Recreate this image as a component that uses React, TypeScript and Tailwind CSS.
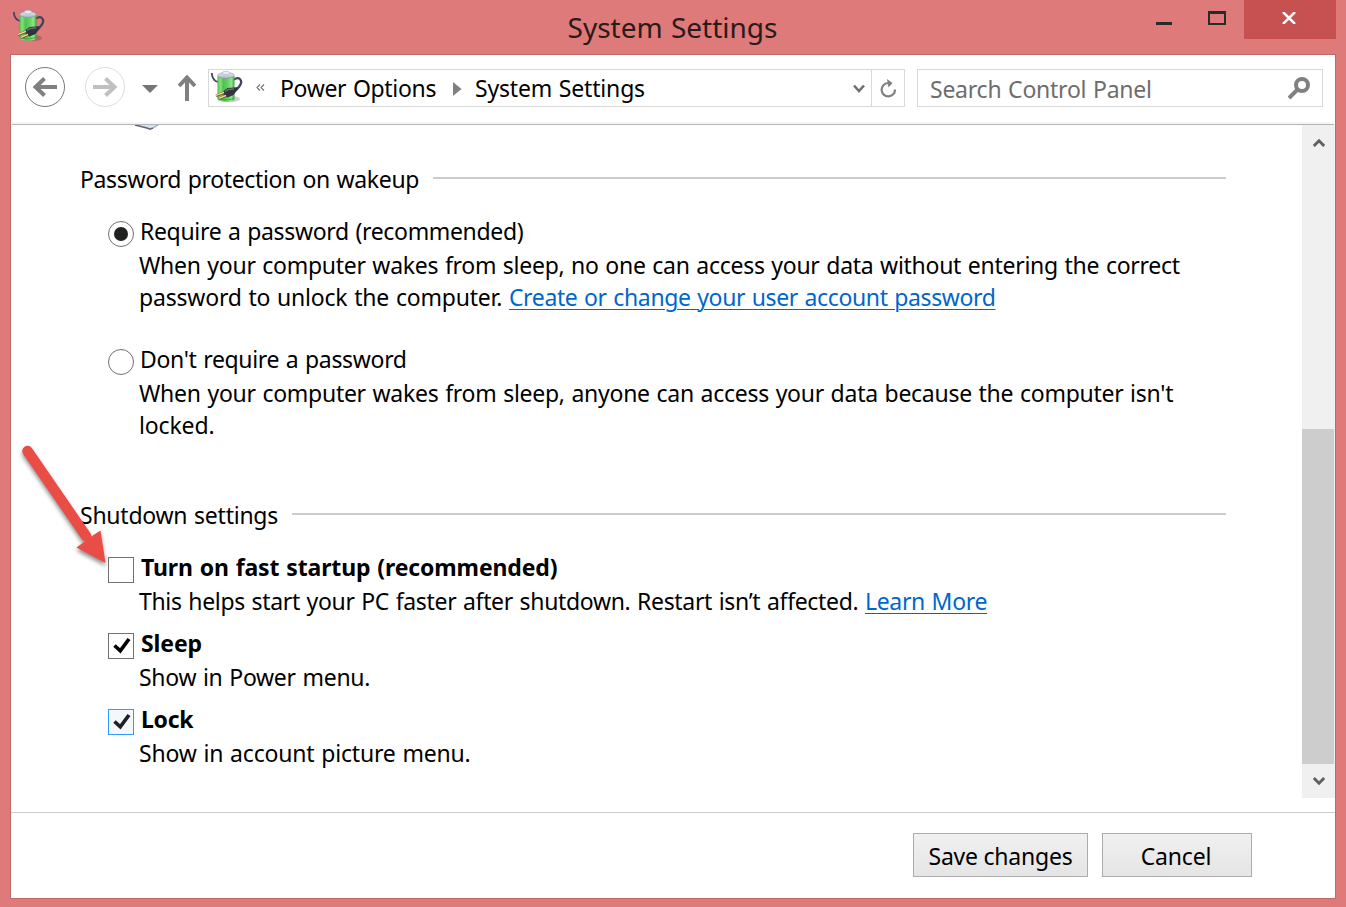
import React from 'react';

function PowerIcon() {
  return (
    <svg width="32" height="34" viewBox="0 0 32 34" className="shrink-0">
      <defs>
        <linearGradient id="cell" x1="0" x2="1" y1="0" y2="0">
          <stop offset="0" stopColor="#4fb44e" />
          <stop offset="0.15" stopColor="#86e280" />
          <stop offset="0.35" stopColor="#4ec24f" />
          <stop offset="0.6" stopColor="#62d25f" />
          <stop offset="0.82" stopColor="#8ce787" />
          <stop offset="1" stopColor="#3f9f43" />
        </linearGradient>
        <linearGradient id="cap" x1="0" x2="0" y1="0" y2="1">
          <stop offset="0" stopColor="#eef1f6" />
          <stop offset="1" stopColor="#a3afbf" />
        </linearGradient>
      </defs>
      <ellipse cx="21" cy="29" rx="8" ry="3" fill="#000" opacity="0.18" />
      <path d="M0.800 3C1 8 3 11 7 12" fill="none" stroke="#45425f" strokeWidth="1.800" />
      <path d="M23 9.500C28 6 31.500 10 29.500 14.500C28.500 17 27 18 25 20" fill="none" stroke="#45425f" strokeWidth="2.300" />
      <path d="M6.500 6V29C6.500 32.600 23.500 32.600 23.500 29V6Z" fill="url(#cell)" />
      <path d="M6.800 27.500C8 30.500 22 30.500 23.200 27.500" fill="none" stroke="#3c9a42" strokeWidth="0.800" />
      <ellipse cx="15" cy="5.500" rx="8.300" ry="3" fill="url(#cap)" stroke="#8794a6" strokeWidth="0.600" />
      <ellipse cx="15" cy="3" rx="3.600" ry="1.800" fill="#e9eef3" stroke="#a4afbb" strokeWidth="0.600" />
      <path d="M12.500 21L16.500 18L23 17.500L26.500 17L26 20.500L22.500 25L16.500 27.500L12.500 25Z" fill="#34333d" />
      <path d="M14 21.500L17 19.500L23 19" fill="none" stroke="#6c6c7a" strokeWidth="1.500" />
      <path d="M13 22.800L5 25.800M15 25.800L8 28.800" stroke="#7a5526" strokeWidth="2.600" />
      <path d="M13 22.400L5 25.400M15 25.400L8 28.400" stroke="#f3d8a0" strokeWidth="1.500" />
    </svg>
  );
}

function Chevron({ up = false }: { up?: boolean }) {
  return (
    <svg width="12" height="10" viewBox="0 0 12 10">
      <path d={up ? 'M0.800 8L6 2.800L11.200 8' : 'M0.800 2L6 7.200L11.200 2'} fill="none" stroke="#606060" strokeWidth="2.900" />
    </svg>
  );
}

function Heading({ text, className }: { text: string; className: string }) {
  return (
    <div className="flex h-8 w-[1146px] items-center">
      <h2 className={`shrink-0 ${className}`}>{text}</h2>
      <div className="mb-[3px] h-[2px] flex-1 bg-[#cccccc]" />
    </div>
  );
}

function Radio({ checked = false }: { checked?: boolean }) {
  return (
    <svg width="26" height="26" viewBox="0 0 26 26" className="mt-[6px] shrink-0">
      <circle cx="13" cy="13" r="12.500" fill="#fff" stroke="#707070" />
      {checked && <circle cx="13" cy="13" r="7" fill="#212121" />}
    </svg>
  );
}

function Check({ checked = false, hot = false }: { checked?: boolean; hot?: boolean }) {
  return (
    <div className={`mt-[6px] h-[26px] w-[26px] shrink-0 border ${hot ? 'border-[#3399ff] bg-[#f3f8ff]' : 'border-[#707070] bg-white'}`}>
      {checked && (
        <svg width="24" height="24" viewBox="0 0 24 24">
          <path d="M5.500 11.500L11.300 16.800L20 5" fill="none" stroke={hot ? '#212121' : '#000'} strokeWidth="3.700" />
        </svg>
      )}
    </div>
  );
}

export default function App() {
  return (
    <div className="relative flex h-[907px] w-[1346px] flex-col overflow-hidden bg-[#de7a79] font-['Noto_Sans','Open_Sans',sans-serif] text-[23px] leading-8 tracking-[-0.28px] whitespace-nowrap text-black [word-spacing:1px]">
      <header className="flex h-[54px] shrink-0 items-start">
        <div className="w-[400px] pt-[9px] pl-[13px]"><PowerIcon /></div>
        <h1 className="w-[545px] pt-[11px] text-center text-[28px] leading-8 tracking-[0px] text-[#2b1a1a]">System Settings</h1>
        <div className="flex flex-1">
          <div className="ml-[211px] mt-[22px] h-[3px] w-4 bg-[#2a2a2a]" />
          <div className="ml-9 mt-[11px] h-[14px] w-[18px] border-2 border-t-[3px] border-[#2a2a2a]" />
          <div className="ml-[18px] flex h-[39px] w-[92px] justify-center bg-[#c75050] pt-3">
            <svg width="14" height="12" viewBox="0 0 14 12" className="-ml-[3px]">
              <path d="M1 0L13 12M13 0L1 12" stroke="#fff" strokeWidth="2.500" />
            </svg>
          </div>
        </div>
      </header>

      <main className="ml-[10px] flex h-[845px] w-[1326px] shrink-0 flex-col border border-[#c26867] bg-white">
        <nav className="mx-[1px] flex h-[70px] shrink-0 items-start border-b border-[#b4b4b4] bg-[linear-gradient(to_top,#f5f5f5_2px,#fff_2px)]">
          <svg width="40" height="40" viewBox="0 0 40 40" className="ml-[13px] mt-3">
            <circle cx="20" cy="20" r="19.500" fill="none" stroke="#787878" />
            <path d="M32 20H10M19.500 11.500L10.500 20L19.500 28.500" fill="none" stroke="#808080" strokeWidth="4" />
          </svg>
          <svg width="40" height="40" viewBox="0 0 40 40" className="ml-5 mt-3">
            <circle cx="20" cy="20" r="19.500" fill="none" stroke="#dcdcdc" />
            <path d="M8 20H30M20.500 11.500L29.500 20L20.500 28.500" fill="none" stroke="#c0c0c0" strokeWidth="4" />
          </svg>
          <svg width="16" height="8" viewBox="0 0 16 8" className="ml-[17px] mt-[30px]"><path d="M0 0H16L8 8Z" fill="#767676" /></svg>
          <svg width="18" height="26" viewBox="0 0 18 26" className="ml-5 mt-5"><path d="M9 26V2M1 11L9 2.500L17 11" fill="none" stroke="#808080" strokeWidth="4" /></svg>
          <div className="ml-[12px] mt-[14px] flex h-[38px] w-[697px] items-start border border-[#d9d9d9]">
            <div className="ml-[2px]"><PowerIcon /></div>
            <svg width="9" height="7" viewBox="0 0 9 7" className="ml-[13px] mt-[14px]"><path d="M4 0.500L1 3.500L4 6.500M8 0.500L5 3.500L8 6.500" fill="none" stroke="#777" strokeWidth="1.200" /></svg>
            <span className="ml-[14px] mt-[2px] w-[158px] pl-[1px] tracking-[-0.33px]">Power Options</span>
            <svg width="9" height="14" viewBox="0 0 9 14" className="ml-4 mt-3"><path d="M0 0L8.500 7L0 14Z" fill="#808080" /></svg>
            <span className="ml-[13px] mt-[2px] tracking-[-0.18px]">System Settings</span>
            <svg width="12" height="10" viewBox="0 0 12 10" className="mr-[6px] ml-auto mt-[14px]"><path d="M1 1.500L6 7L11 1.500" fill="none" stroke="#707070" strokeWidth="2.600" /></svg>
            <div className="flex h-9 w-[33px] border-l border-[#d9d9d9] pt-[9px] pl-2">
              <svg width="17" height="19" viewBox="0 0 17 19"><path d="M8 4A6.700 6.700 0 1 0 15 10.500" fill="none" stroke="#808080" strokeWidth="2.200" /><path d="M7 0L12.500 4L8.500 8.500Z" fill="#808080" /></svg>
            </div>
          </div>
          <div className="ml-3 mt-[14px] flex h-[38px] w-[406px] items-start border border-[#d9d9d9] text-[#6d6d6d]">
            <span className="ml-3 mt-[3px] tracking-[-0.24px]">Search Control Panel</span>
            <svg width="22" height="23" viewBox="0 0 22 23" className="mr-3 ml-auto mt-[7px]"><circle cx="14" cy="8" r="6" fill="none" stroke="#808080" strokeWidth="4" /><path d="M10 12L1 21" stroke="#808080" strokeWidth="4" /></svg>
          </div>
        </nav>

        <div className="flex h-[673px] shrink-0">
          <section className="flex w-[1291px] flex-col pl-[69px]">
            <svg width="28" height="6" viewBox="0 0 28 6" className="ml-[53px] shrink-0"><path d="M2 0L16 4L25 0Z" fill="#d3e3f3" /><path d="M2 0L14 3L17 4.200L20 3" fill="none" stroke="#606375" strokeWidth="1.500" /><path d="M20 3L25 0" stroke="#9aa3b5" strokeWidth="1.200" /></svg>
            <div className="mt-[32px]"><Heading text="Password protection on wakeup" className="w-[353px] tracking-[-0.36px]" /></div>
            <div className="mt-5 flex pl-7">
              <Radio checked />
              <span className="ml-[6px] tracking-[-0.33px]">Require a password (recommended)</span>
            </div>
            <p className="mt-[2px] pl-[59px]">
              <span>When your computer wakes from sleep, no one can access your data without entering the correct</span><br />
              <span className="tracking-[-0.2px]">password to unlock the computer. </span><a className="tracking-[-0.37px] text-[#0066cc] underline decoration-1 underline-offset-[3px]">Create or change your user account password</a>
            </p>
            <div className="mt-[30px] flex pl-7">
              <Radio />
              <span className="ml-[6px] tracking-[-0.33px]">Don't require a password</span>
            </div>
            <p className="mt-[2px] pl-[59px]">
              <span className="tracking-[-0.27px]">When your computer wakes from sleep, anyone can access your data because the computer isn't</span><br />
              <span className="tracking-[-0.15px]">locked.</span>
            </p>
            <div className="mt-[58px]"><Heading text="Shutdown settings" className="w-[212px] tracking-[-0.24px]" /></div>
            <div className="mt-5 flex pl-7 font-bold">
              <Check />
              <span className="ml-[7px] tracking-[-0.12px]">Turn on fast startup (recommended)</span>
            </div>
            <p className="mt-[2px] pl-[59px]"><span className="tracking-[-0.33px]">This helps start your PC faster after shutdown. Restart isn’t affected. </span><a className="tracking-[-0.33px] text-[#0066cc] underline decoration-1 underline-offset-[3px]">Learn More</a></p>
            <div className="mt-[10px] flex pl-7 font-bold">
              <Check checked />
              <span className="ml-[7px] tracking-[-0.1px]">Sleep</span>
            </div>
            <p className="mt-[2px] pl-[59px]">Show in Power menu.</p>
            <div className="mt-[10px] flex pl-7 font-bold">
              <Check checked hot />
              <span className="ml-[7px]">Lock</span>
            </div>
            <p className="mt-[2px] pl-[59px] tracking-[-0.18px]">Show in account picture menu.</p>
          </section>
          <div className="flex w-[33px] flex-col bg-[#f0f0f0]">
            <div className="flex h-[304px] justify-center pt-[13px]"><Chevron up /></div>
            <div className="h-[335px] w-8 bg-[#cdcdcd]" />
            <div className="flex justify-center pt-3"><Chevron /></div>
          </div>
        </div>

        <footer className="mt-[14px] flex flex-1 items-start border-t border-[#cccccc] pt-5 pl-[902px]">
          <button className="h-[44px] w-[175px] border border-[#acacac] bg-linear-to-b from-[#f0f0f0] to-[#e5e5e5] pt-[2px] tracking-[-0.22px]">Save changes</button>
          <button className="ml-[14px] h-[44px] w-[150px] border border-[#acacac] bg-linear-to-b from-[#f0f0f0] to-[#e5e5e5] pt-[2px] pr-[2px] tracking-[-0.15px]">Cancel</button>
        </footer>
      </main>

      <svg width="110" height="140" viewBox="0 0 110 140" className="absolute top-[435px] left-[10px] drop-shadow-[0px_3px_2px_rgba(0,0,0,0.45)]">
        <path d="M17.500 16L76 101" stroke="#ea4d46" strokeWidth="10.500" strokeLinecap="round" />
        <path d="M95.500 128L90.500 95.500L82 101L74 107L66.500 112.500Z" fill="#ea4d46" />
      </svg>
    </div>
  );
}
